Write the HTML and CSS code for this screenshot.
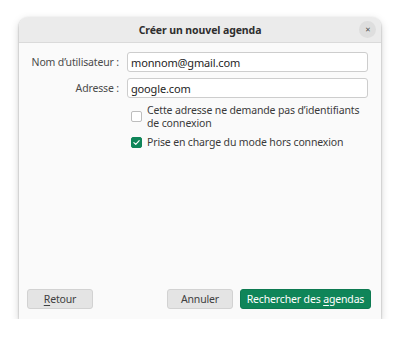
FILE: index.html
```html
<!DOCTYPE html>
<html lang="fr">
<head>
  <meta charset="UTF-8" />
  <title>Créer un nouvel agenda</title>
  <link rel="stylesheet" href="styles.css">
</head>
<body>
  <div class="dialog">
    <div class="titlebar">
      <span class="title">Créer un nouvel agenda</span>
      <span class="close">&#x2715;</span>
    </div>
    <div class="content">
      <div class="form">
        <label class="field-label">Nom d’utilisateur :</label>
        <div class="entry">monnom@gmail.com</div>
        <label class="field-label">Adresse :</label>
        <div class="entry">google.com</div>
      </div>
      <div class="checks">
        <label class="check-row">
          <span class="box"></span>
          <span class="check-text">Cette adresse ne demande pas d’identifiants<br>de connexion</span>
        </label>
        <label class="check-row">
          <span class="box checked">
            <svg viewBox="0 0 12 12" width="11" height="11"><path d="M2.5 6.2 L5 8.6 L9.6 3.4" fill="none" stroke="#fff" stroke-width="1.5" stroke-linecap="round" stroke-linejoin="round"/></svg>
          </span>
          <span class="check-text">Prise en charge du mode hors connexion</span>
        </label>
      </div>
    </div>
    <div class="actions">
      <button class="btn back"><u>R</u>etour</button>
      <div class="spacer"></div>
      <button class="btn cancel">Annuler</button>
      <button class="btn suggested">Rechercher des <u>a</u>gendas</button>
    </div>
  </div>
</body>
</html>
```

FILE: styles.css
```css
* { box-sizing:border-box; }
body {
  margin:0; background:#ffffff;
  font-family:"Noto Sans", sans-serif;
  font-size:10.5px; letter-spacing:-0.15px; color:#3d3d3d;
}
.dialog {
  margin:17px 0 0 19px;
  width:362px; height:302px;
  background:#fafafa;
  border-radius:9px 9px 0 0;
  box-shadow:0 1px 2px rgba(0,0,0,0.35), 0 3px 9px rgba(0,0,0,0.18);
  display:flex; flex-direction:column;
}
.titlebar {
  height:26px; position:relative;
  background:#ebebeb;
  border-bottom:1px solid #dadada;
  border-radius:9px 9px 0 0;
  display:flex; align-items:center; justify-content:center;
}
.title { font-weight:700; font-size:10.5px; letter-spacing:-0.1px; color:#2e2e2e; }
.close {
  position:absolute; right:5px; top:4px;
  width:17px; height:17px; border-radius:50%;
  background:#dedede; color:#555;
  font-size:7px;
  display:flex; align-items:center; justify-content:center;
}
.content { flex:1; padding:9px 13px 0 10px; }
.form {
  display:grid; grid-template-columns:90px 1fr;
  column-gap:8px; row-gap:6px; align-items:center;
}
.field-label { text-align:right; color:#4a4a4a; white-space:nowrap; }
.entry {
  height:20px; background:#ffffff;
  border:1px solid #cdcdcd; border-radius:3px;
  padding:0 3px; color:#1e1e1e;
  display:flex; align-items:center;
  font-size:11px;
}
.checks {
  margin:6px 0 0 102px;
  display:flex; flex-direction:column; gap:7px;
}
.check-row { display:flex; align-items:center; gap:5px; color:#3a3a3a; }
.check-text { line-height:12.5px; white-space:nowrap; }
.box {
  width:11px; height:11px; flex:none;
  border:1px solid #bdbdbd; border-radius:2px;
  background:#ffffff;
  display:flex; align-items:center; justify-content:center;
}
.box.checked { background:#0f8559; border-color:#0f8559; }
.actions {
  display:flex; align-items:center; gap:7px;
  padding:0 10px 10px 8px;
}
.spacer { flex:1; }
.btn {
  height:20px; padding:0;
  font-family:inherit; font-size:10.5px; letter-spacing:-0.15px; color:#404040;
  background:#e4e4e4; border:1px solid #d2d2d2; border-radius:3px;
  white-space:nowrap;
}
.btn.back, .btn.cancel { width:66px; }
.btn u { text-decoration-thickness:1px; text-underline-offset:2px; }
.btn.suggested {
  background:#0f8559; border-color:#0d7a51; color:#ffffff;
  width:131px;
}
```
